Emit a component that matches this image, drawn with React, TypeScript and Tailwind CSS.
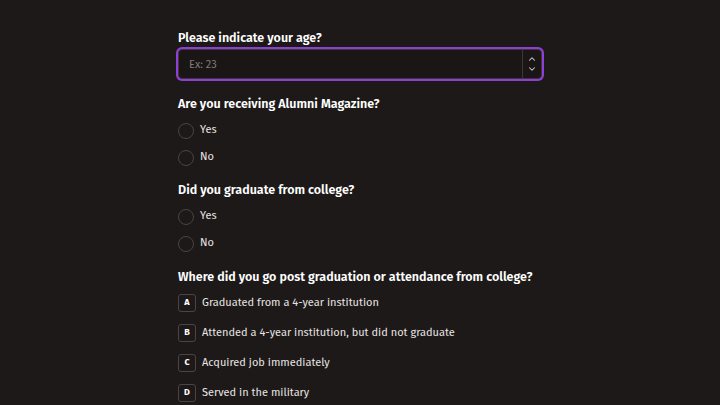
import { ChevronDown, ChevronUp } from 'lucide-react';

const font = { fontFamily: '"Fira Sans", "Open Sans", sans-serif' };

const RadioOption = ({ label }: { label: string }) => (
  <label className="flex h-[27px] items-center gap-[6px]">
    <span className="h-[16px] w-[16px] shrink-0 rounded-full border border-[#4a4443]" />
    <span className="text-[11px] tracking-[0.1px] text-[#e8e4e3]">{label}</span>
  </label>
);

const LetterOption = ({ letter, label }: { letter: string; label: string }) => (
  <div className="flex h-[30px] items-center gap-[6px]">
    <span className="flex h-[18px] w-[18px] shrink-0 items-center justify-center rounded-[3px] border border-[#4a4443] bg-transparent text-[9px] font-bold text-white">
      {letter}
    </span>
    <span className="text-[11px] text-[#e8e4e3]">{label}</span>
  </div>
);

const Question = ({ children }: { children: string }) => (
  <h2 className="text-[12.5px] leading-[20px] font-semibold text-white">{children}</h2>
);

export default function App() {
  return (
    <div className="min-h-screen bg-[#1d1918]" style={font}>
      <div className="mx-auto w-[364px] pt-[28px]">
        <Question>Please indicate your age?</Question>
        <div className="mt-[1px] flex h-[30px] items-center rounded-[4px] border border-[#3d3837] bg-[#1a1615] ring-2 ring-[#8f3fd6]">
          <input
            className="h-full min-w-0 flex-1 bg-transparent px-[10px] text-[11px] text-white outline-none placeholder:text-[#7f7978]"
            placeholder="Ex: 23"
          />
          <div className="flex h-full w-[19px] flex-col items-center justify-center border-l border-[#3d3837] text-[#d8d4d3]">
            <ChevronUp size={10} strokeWidth={2.5} />
            <ChevronDown size={10} strokeWidth={2.5} />
          </div>
        </div>

        <div className="mt-[15px]">
          <Question>Are you receiving Alumni Magazine?</Question>
          <div className="mt-[3px]">
            <RadioOption label="Yes" />
            <RadioOption label="No" />
          </div>
        </div>

        <div className="mt-[9px]">
          <Question>Did you graduate from college?</Question>
          <div className="mt-[3px]">
            <RadioOption label="Yes" />
            <RadioOption label="No" />
          </div>
        </div>

        <div className="mt-[10px]">
          <Question>Where did you go post graduation or attendance from college?</Question>
          <div className="mt-[1px]">
            <LetterOption letter="A" label="Graduated from a 4-year institution" />
            <LetterOption letter="B" label="Attended a 4-year institution, but did not graduate" />
            <LetterOption letter="C" label="Acquired job immediately" />
            <LetterOption letter="D" label="Served in the military" />
          </div>
        </div>
      </div>
    </div>
  );
}
